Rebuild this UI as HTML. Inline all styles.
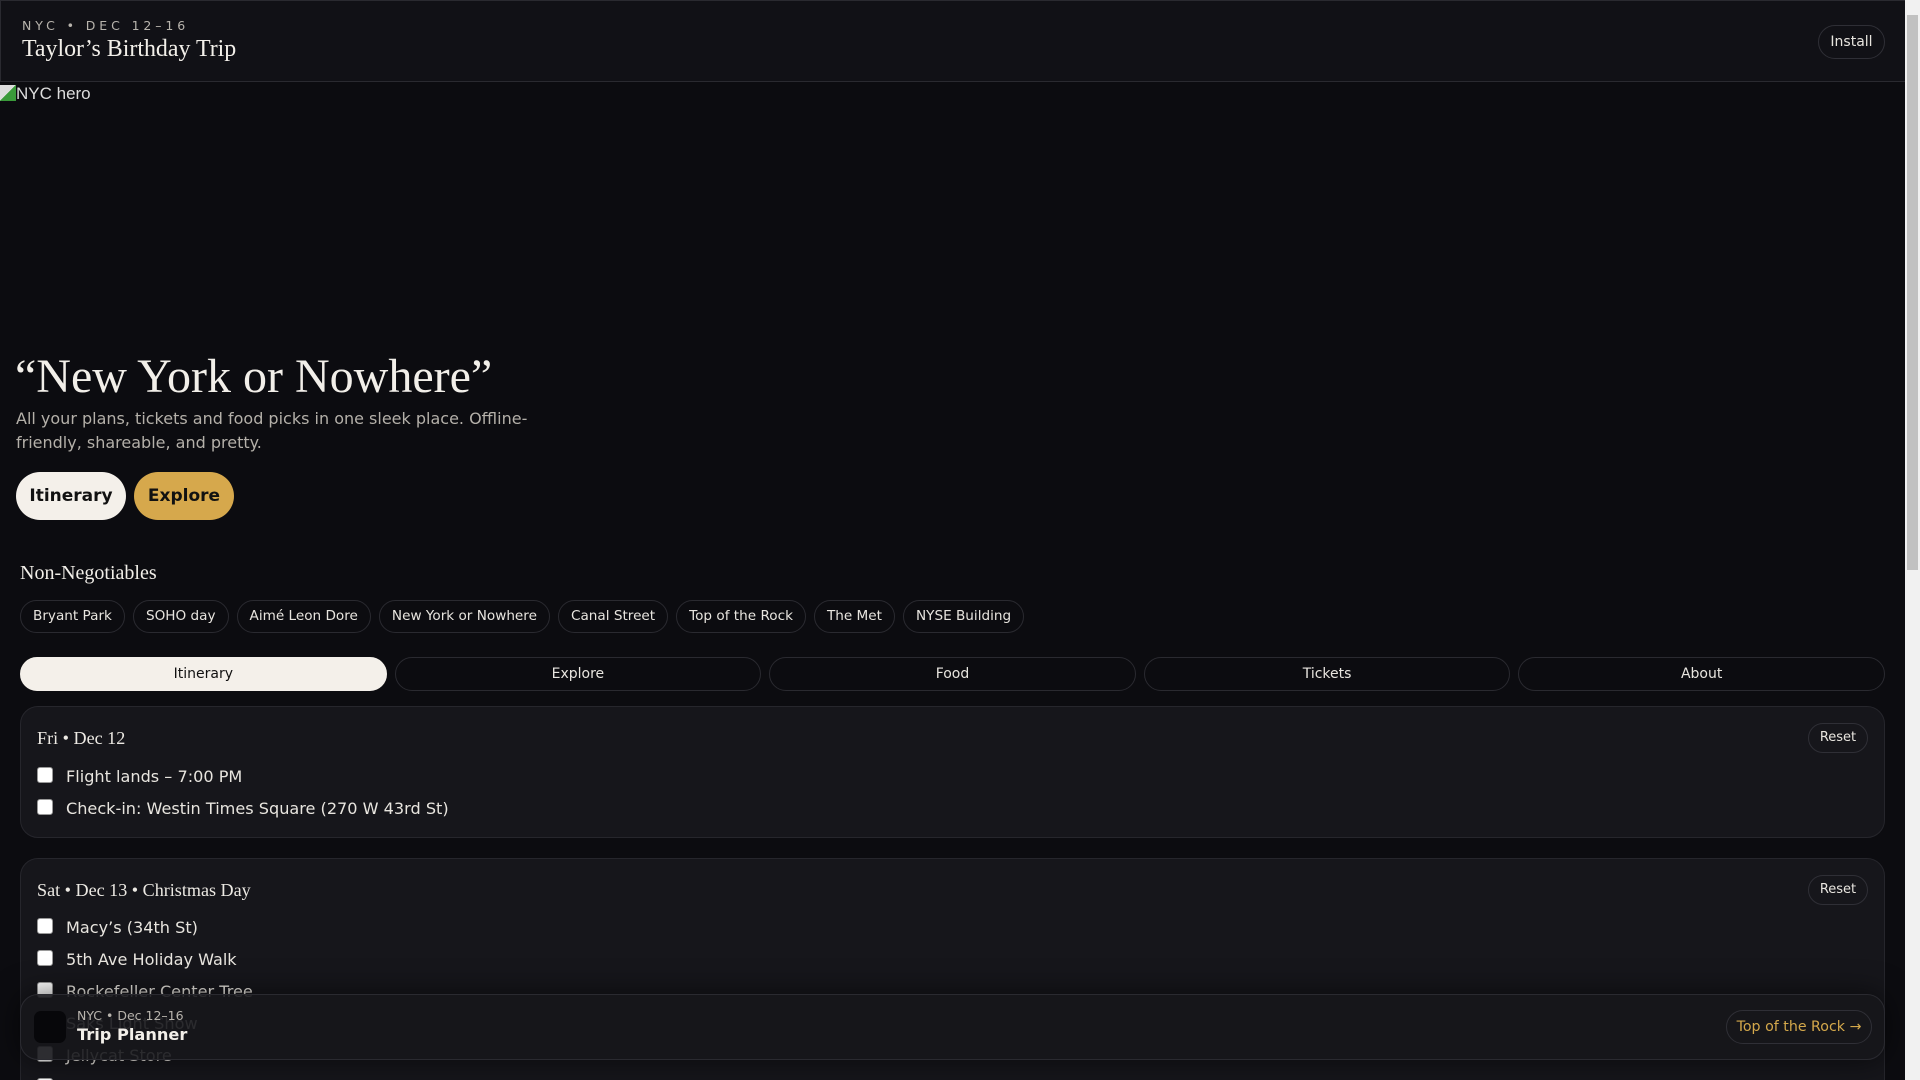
<!DOCTYPE html>
<html><head><meta charset="utf-8"><style>
*{box-sizing:border-box;margin:0;padding:0}
html,body{width:1920px;height:1080px;overflow:hidden;background:#0c0c10;color:#f2efe9;font-family:"DejaVu Sans","Liberation Sans",sans-serif}
.wrap{position:absolute;left:0;top:0;width:1905px;height:1080px;overflow:hidden}
header{position:absolute;left:0;top:0;width:1905px;height:82px;background:#111116;border:1px solid #2a2a30;border-right:none}
.eyebrow{position:absolute;left:21px;top:17px;font-size:12.5px;letter-spacing:3.9px;color:#b8b4ad}
.ttl{position:absolute;left:21px;top:35px;font-family:"Liberation Serif",serif;font-size:23.9px;color:#f2efe9}
.install{position:absolute;left:1817px;top:24px;width:67px;height:34px;border:1px solid #2f2f36;border-radius:17px;font-size:14px;line-height:32px;text-align:center;color:#e8e5df}
.hero{position:absolute;left:0;top:84px;font-family:"Liberation Sans",sans-serif;font-size:17px;color:#ddd}
.hero i{display:inline-block;width:16px;height:16px;vertical-align:-2px;background:linear-gradient(135deg,#ddd 50%,#3a9a3a 50%)}
h1{position:absolute;left:15px;top:349px;font-family:"Liberation Serif",serif;font-weight:normal;font-size:48px;color:#f2efe9}
.lead{position:absolute;left:16px;top:407px;width:540px;font-size:16px;line-height:24px;color:#b4b0a9}
.b{position:absolute;top:472px;height:48px;border-radius:24px;font-weight:bold;font-size:17px;line-height:48px;text-align:center;color:#111}
h2{position:absolute;left:20px;top:562px;font-family:"Liberation Serif",serif;font-weight:normal;font-size:20px}
.chips{position:absolute;left:20px;top:600px;display:flex;gap:8px}
.chips span{height:33px;border:1px solid #2a2a30;border-radius:17px;padding:0 12px;font-size:13.6px;line-height:31px;color:#e8e5df}
.tabs{position:absolute;left:20px;top:657px;width:1865px;display:flex;gap:8px}
.tabs span{flex:1;height:34px;border:1px solid #2a2a30;border-radius:17px;text-align:center;font-size:14px;line-height:33px;color:#e8e5df}
.tabs span.on{background:#f4f0ea;color:#111;border-color:#f4f0ea}
.card{position:absolute;left:20px;width:1865px;background:#16161b;border:1px solid #26262c;border-radius:18px}
.card h3{position:absolute;left:16px;top:21px;font-family:"Liberation Serif",serif;font-weight:normal;font-size:18.1px;color:#ece9e3}
.reset{position:absolute;right:16px;top:16px;width:60px;height:30px;border:1px solid #2f2f36;border-radius:15px;font-size:13px;line-height:28px;text-align:center;color:#e8e5df}
.it{position:absolute;left:16px;font-size:16.1px;color:#e8e5df;white-space:nowrap}
.it b{display:inline-block;width:16px;height:16px;background:#fff;border-radius:3px;margin-right:13px;vertical-align:-1px;border:1px solid #999}
.bar{position:absolute;left:20px;top:994px;width:1865px;height:66px;background:rgba(22,22,27,.9);border:1px solid #2a2a30;border-radius:18px;box-shadow:0 0 30px rgba(0,0,0,.6)}
.icon{position:absolute;left:13px;top:16px;width:32px;height:32px;background:#07070a;border-radius:7px}
.sm{position:absolute;left:56px;top:13px;font-size:12.5px;color:#b8b4ad}
.tp{position:absolute;left:56px;top:30px;font-size:16.2px;font-weight:bold;color:#f2efe9}
.rock{position:absolute;right:12px;top:15px;width:146px;height:34px;border:1px solid #2f2f36;border-radius:17px;font-size:14.2px;line-height:32px;text-align:center;color:#d4a84b}
.sb{position:absolute;left:1905px;top:0;width:15px;height:1080px;background:#f1f1f1}
.sb .th{position:absolute;left:2px;top:15px;width:11px;height:555px;background:#c1c1c1}
</style></head><body>
<div class="wrap">
<header>
<div class="eyebrow">NYC • DEC 12–16</div>
<div class="ttl">Taylor’s Birthday Trip</div>
<div class="install">Install</div>
</header>
<div class="hero"><i></i>NYC hero</div>
<h1>“New York or Nowhere”</h1>
<div class="lead">All your plans, tickets and food picks in one sleek place. Offline-friendly, shareable, and pretty.</div>
<div class="b" style="left:16px;width:110px;background:#f4f0ea">Itinerary</div>
<div class="b" style="left:134px;width:100px;background:#d6a84c">Explore</div>
<h2>Non-Negotiables</h2>
<div class="chips"><span>Bryant Park</span><span>SOHO day</span><span>Aimé Leon Dore</span><span>New York or Nowhere</span><span>Canal Street</span><span>Top of the Rock</span><span>The Met</span><span>NYSE Building</span></div>
<div class="tabs"><span class="on">Itinerary</span><span>Explore</span><span>Food</span><span>Tickets</span><span>About</span></div>
<div class="card" style="top:706px;height:132px">
<h3>Fri • Dec 12</h3><div class="reset">Reset</div>
<div class="it" style="top:60px"><b></b>Flight lands – 7:00 PM</div>
<div class="it" style="top:92px"><b></b>Check-in: Westin Times Square (270 W 43rd St)</div>
</div>
<div class="card" style="top:858px;height:260px">
<h3>Sat • Dec 13 • Christmas Day</h3><div class="reset">Reset</div>
<div class="it" style="top:59px"><b></b>Macy’s (34th St)</div>
<div class="it" style="top:91px"><b></b>5th Ave Holiday Walk</div>
<div class="it" style="top:123px"><b></b>Rockefeller Center Tree</div>
<div class="it" style="top:155px"><b></b>Saks Light Show</div>
<div class="it" style="top:187px"><b></b>Jellycat Store</div>
<div class="it" style="top:219px"><b></b>Bryant Park</div>
</div>
<div class="bar"><div class="icon"></div><div class="sm">NYC • Dec 12–16</div><div class="tp">Trip Planner</div><div class="rock">Top of the Rock →</div></div>
</div>
<div class="sb"><div class="th"></div></div>
</body></html>
